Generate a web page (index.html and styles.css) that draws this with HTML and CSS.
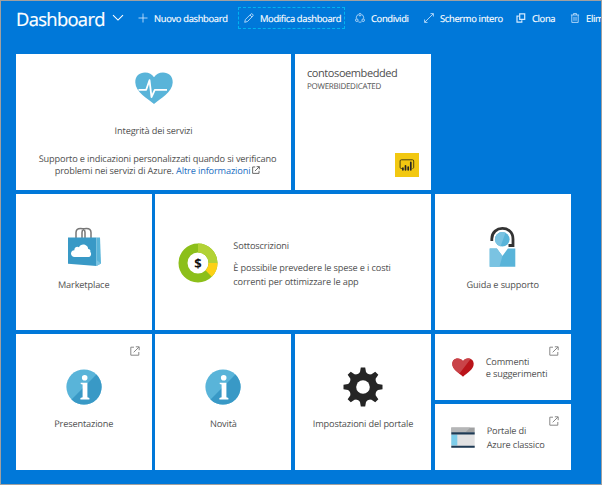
FILE: index.html
```html
<!DOCTYPE html>
<html lang="it">
<head>
<meta charset="utf-8">
<title>Dashboard</title>
<link rel="stylesheet" href="styles.css">
</head>
<body>
<svg class="defs" width="0" height="0">
  <symbol id="external" viewBox="0 0 10 10"><path d="M4 1.2H.8v8h8V6M5.8.8h3.4v3.4M9 1 3.7 6.3" fill="none" stroke="currentColor" stroke-width="1"/></symbol>
  <symbol id="info" viewBox="0 0 36 36"><circle cx="18" cy="18" r="17.6" fill="#59b4d9"/><path d="M5.5 30.4 30.4 5.5A17.6 17.6 0 0 1 5.5 30.4Z" fill="#3999c6"/><circle cx="18.7" cy="8.8" r="2.8" fill="#fff"/><path d="M14.7 13.7h6.7v14.6l2 .8v1.3h-9v-1.3l2.2-.8V15.4l-1.9-.5Z" fill="#fff"/></symbol>
</svg>
<div class="page">
  <header class="bar">
    <h1 class="title">Dashboard</h1>
    <svg class="chevron" viewBox="0 0 12 8"><path d="m1 1.2 5 4.9 5-4.9" fill="none" stroke="#fff" stroke-width="1.1"/></svg>
    <nav class="tools">
      <a class="tool"><svg viewBox="0 0 10 10"><path d="M5 .5v9M.5 5h9"/></svg><span>Nuovo dashboard</span></a>
      <a class="tool active"><svg viewBox="0 0 10 10"><path d="m.7 9.3.7-2.800L7 .9c.8-.8 2.800 1.100 2 2L3.500 8.500ZM6 2l2 2"/></svg><span>Modifica dashboard</span></a>
      <a class="tool"><svg viewBox="0 0 10 10"><path d="M3.100 1.500C1.800 2.300 1.200 4 1.300 5.500M6.900 1.500c1.300.8 1.900 2.400 1.800 4M3.400 8.800c1 .5 2.200.5 3.200 0"/><circle cx="5" cy="1.700" r="1.200"/><circle cx="1.800" cy="7.200" r="1.300"/><circle cx="8.200" cy="7.200" r="1.300"/></svg><span>Condividi</span></a>
      <a class="tool"><svg viewBox="0 0 10 10"><path d="M6.500.6h2.900v2.900M9.200.8.8 9.200M.6 6.500v2.900h2.900"/></svg><span>Schermo intero</span></a>
      <a class="tool clone"><svg viewBox="0 0 10 10"><path d="M3.700.8h5v5.500h-5ZM2.800 3.200H1v6h4.800V7.300"/></svg><span>Clona</span></a>
      <a class="tool"><svg viewBox="0 0 10 10"><path d="M.9 2h8.200M3.500 1.800V.6h3v1.200M1.800 2.200v7.200h6.400V2.200M4 3.800v4M6 3.800v4"/></svg><span>Elimina</span></a>
    </nav>
  </header>
  <main class="board">
    <section class="tile wide health">
      <svg class="pulse" viewBox="0 0 38 32"><path d="M19 32C13 27 .5 20 .3 10.500C0 4 4.500 .4 10 .4c4 0 7 1.800 9 4.800C21 2.200 24 .4 28 .4c5.500 0 10 3.600 9.700 10.100C37.500 20 25 27 19 32Z" fill="#59b4d9"/><path d="M3.500 17.800h7.700l3.300-9.600 2 17 3.300-7.400H32" fill="none" stroke="#fff" stroke-width="1.800" stroke-linejoin="round"/></svg>
      <h2 class="label">Integrità dei servizi</h2>
      <p class="copy">Supporto e indicazioni personalizzati quando si verificano<br>problemi nei servizi di Azure. <a class="link">Altre informazioni</a><svg class="ext-inline"><use href="#external"/></svg></p>
    </section>
    <section class="tile resource">
      <h2 class="res-name">contosoembedded</h2>
      <p class="res-kind">POWERBIDEDICATED</p>
      <svg class="powerbi" viewBox="0 0 24 24"><path d="M0 0h24v24H0Z" fill="#f2c811"/><path d="M7 15.500H6.300c-.8 0-1.200-.5-1.200-1.200V8c0-.8.4-1.200 1.200-1.200h11.200c.8 0 1.200.4 1.200 1.200v6.300c0 .7-.4 1.200-1.200 1.200" fill="none" stroke="#3b3410" stroke-width=".9"/><path d="M7.900 16.800v-1.600M10.500 16.800v-4M13.200 16.800v-2.600M15.800 16.800V9.400" stroke="#252525" stroke-width="1.700" stroke-linecap="round"/></svg>
    </section>
    <section class="tile app market">
      <svg class="bag" viewBox="0 0 36 40"><path d="M10 12V5.500C10 0 19 0 19 5.500V12M16 12V5.500C16 0 25 0 25 5.500V12" fill="none" stroke="#777" stroke-width="1.500"/><path d="M2 10.500h28.500V39L2 36.800Z" fill="#3999c6"/><path d="M30.500 10.500H34l1 26-4.500 2.500Z" fill="#59b4d9"/><path d="m30.500 33 4.500 3.500-4.500 2.500Z" fill="#7ac3e2"/><path d="M8.500 30C4 30 3.700 23.500 8.400 23.300 8 20 11.500 19 13 20.300c1.700-4.600 9-3.300 9.200 1.700 2.600 0 2.300 2.500 2 2.900 1.500.7 1.200 5.100-1.600 5.100Z" fill="#fff"/></svg>
      <h2 class="label">Marketplace</h2>
    </section>
    <section class="tile wide subs">
      <svg class="donut" viewBox="0 0 40 40"><circle cx="20" cy="20" r="15" fill="none" stroke="#8cbf1a" stroke-width="9"/><path d="M20 5a15 15 0 0 1 15 15" fill="none" stroke="#b2d235" stroke-width="9"/><path d="M35 20c0 4-1.700 8-4.400 10.600" fill="none" stroke="#fcd116" stroke-width="9"/><text x="20" y="24.500" text-anchor="middle" class="dollar">$</text></svg>
      <div class="subs-text"><h2>Sottoscrizioni</h2><p>È possibile prevedere le spese e i costi<br>correnti per ottimizzare le app</p></div>
    </section>
    <section class="tile app help">
      <svg class="agent" viewBox="0 0 28 40"><path d="M2.800 14V12C2.800-1.900 24-2.200 24 12v6.500H19.500" fill="none" stroke="#333" stroke-width="2.800"/><circle cx="13.300" cy="12.300" r="7.300" fill="#59b4d9"/><path d="M11.500 19.400a7.300 7.300 0 1 1 5-13.600Z" fill="#7ac3e2"/><path d="M.7 21.500h7.200l5.500 7.500 5.500-7.500h7.400V39.800H.7Z" fill="#59b4d9"/><path d="M.7 21.500h7.200l5.500 7.500L10.500 39.800H.7Z" fill="#7ac3e2"/></svg>
      <h2 class="label">Guida e supporto</h2>
    </section>
    <section class="tile app low">
      <svg class="ext"><use href="#external"/></svg>
      <svg class="info"><use href="#info"/></svg>
      <h2 class="label">Presentazione</h2>
    </section>
    <section class="tile app low">
      <svg class="info"><use href="#info"/></svg>
      <h2 class="label">Novità</h2>
    </section>
    <section class="tile app low">
      <svg class="gear" viewBox="-20 -20 40 40"><g fill="#252525"><circle r="14"/><g id="teeth"><path id="tooth" d="M-5.500-12-3-15l.8-4.500h4.400L3-15l2.500 3Z"/><use href="#tooth" transform="rotate(45)"/><use href="#tooth" transform="rotate(90)"/><use href="#tooth" transform="rotate(135)"/></g><use href="#teeth" transform="rotate(180)"/></g><circle r="6.800" fill="#fff"/></svg>
      <h2 class="label">Impostazioni del portale</h2>
    </section>
    <div class="stack">
      <section class="tile mini feedback">
        <svg class="ext"><use href="#external"/></svg>
        <svg class="heart" viewBox="0 0 22 19"><path d="M11 18.700C7 15 .3 11.800.3 5.800.3-.5 8.500-1.200 11 3.200c2.500-4.400 10.700-3.700 10.700 2.600 0 6-6.700 9.200-10.700 12.900Z" fill="#ba141a"/><path d="M7.500 15.600C4 12.800.3 10.500.3 5.800.3-.5 8.500-1.200 11 3.200c1.500-2.600 5-3.600 7.600-2.300Z" fill="#c94348"/></svg>
        <p class="mini-text">Commenti<br>e suggerimenti</p>
      </section>
      <section class="tile mini classic">
        <svg class="ext"><use href="#external"/></svg>
        <svg class="window" viewBox="0 0 24 21"><path d="M.3.500h23.400v5H.3Z" fill="#a0a1a2"/><path d="M.3.500h19l-5 5H.3Z" fill="#b5b6b7"/><path d="M.3 5.500h23.400v15H.3Z" fill="#e2e2e3"/><path d="M.3 7.500h6v11h-6Z" fill="#7dcdea"/><path d="M.3 5.300h23.400v2.200H.3ZM.3 18.700h23.400v2H.3Z" fill="#1e3a54"/></svg>
        <p class="mini-text">Portale di<br>Azure classico</p>
      </section>
    </div>
  </main>
</div>
</body>
</html>
```
FILE: styles.css
```css
* { box-sizing: border-box; margin: 0; padding: 0; }
body { font-family: "Open Sans", "Noto Sans", sans-serif; overflow: hidden; color: #505050; text-rendering: geometricPrecision; }
h1, h2 { font-weight: 400; font-size: inherit; }
svg { display: block; flex: none; }
.defs { position: absolute; }
.page { width: 602px; height: 485px; background: #0078d9; border: 1px solid #a0a0a0; overflow: hidden; }
.bar { height: 53px; display: flex; align-items: flex-start; padding-left: 15px; color: #fff; }
.title { width: 88px; font-size: 18.4px; line-height: 26px; padding-top: 6px; letter-spacing: -.68px; white-space: nowrap; -webkit-text-stroke: .2px #fff; }
.chevron { width: 12px; height: 8px; margin: 13px 0 0 8px; }
.tools { display: grid; grid-template-columns: 100px 117px 69px 92px 54px 60px; margin: 6px 0 0 14px; }
.tool { display: flex; align-items: center; height: 22px; gap: 6px; font-size: 9.4px; letter-spacing: -.33px; white-space: nowrap; -webkit-text-stroke: .15px #fff; }
.tool svg { width: 10px; height: 10px; fill: none; stroke: #d4eaff; stroke-width: .8; }
.tool.active { width: 107px; padding-left: 5px; border: 1px dashed #00b4f0; }
.tool.clone svg { stroke-width: 1.2; }
.board { display: grid; grid-template-columns: repeat(4, 136px); grid-template-rows: repeat(3, 136px); gap: 4px 3.67px; padding-left: 14.7px; }
.tile { background: #fff; font-size: 9.2px; letter-spacing: -.14px; min-width: 0; }
.wide { grid-column: span 2; }
.resource { grid-column: 3; }
.market { grid-column: 1; }
.label { line-height: 12px; white-space: nowrap; }
.app { display: flex; flex-direction: column; align-items: center; position: relative; }
.app .label { margin-top: auto; margin-bottom: 39px; }
.low .label { margin-bottom: 40px; }
.health { display: flex; flex-direction: column; align-items: center; padding-top: 18px; }
.pulse { width: 38px; height: 32px; }
.health .label { margin-top: 21px; }
.copy { margin-top: 16px; padding-left: 8px; line-height: 12px; text-align: center; white-space: nowrap; }
.link { color: #1b6ec2; }
.ext-inline { width: 8px; height: 8px; display: inline-block; margin-left: 2px; color: #444; }
.resource { display: flex; flex-direction: column; padding: 13px 12px 13px; }
.res-name { font-size: 11px; line-height: 14px; letter-spacing: -.42px; }
.res-kind { font-size: 8px; line-height: 11px; letter-spacing: -.26px; }
.powerbi { width: 24px; height: 24px; margin: auto 0 0 auto; }
.bag { width: 36px; height: 40px; margin-top: 33px; }
.subs { display: flex; padding: 49px 0 0 23px; }
.donut { width: 40px; height: 40px; }
.dollar { font: 700 13px "Open Sans", sans-serif; fill: #111; }
.subs-text { margin-left: 15px; margin-top: -4px; line-height: 14px; white-space: nowrap; }
.subs-text p { margin-top: 8px; }
.agent { width: 28px; height: 40px; margin-top: 33px; }
.info { width: 36px; height: 36px; margin-top: 35px; }
.gear { width: 40px; height: 40px; margin-top: 33px; }
.ext { position: absolute; width: 10px; height: 10px; top: 12px; right: 12px; color: #888; }
.stack { display: grid; grid-template-rows: 66px 66px; gap: 4px; }
.mini { position: relative; display: flex; align-items: flex-start; }
.heart { width: 22px; height: 19px; margin: 24px 0 0 17px; }
.window { width: 24px; height: 21px; margin: 23px 0 0 16px; }
.mini-text { margin: 22px 0 0 12px; line-height: 11.5px; white-space: nowrap; }
.classic .mini-text { margin-top: 20px; line-height: 14px; }
```
